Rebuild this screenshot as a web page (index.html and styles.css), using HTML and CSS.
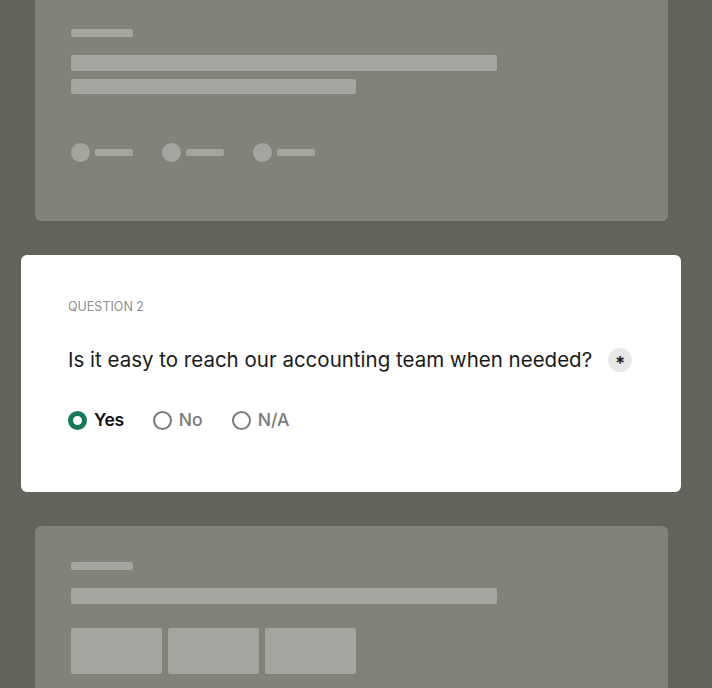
FILE: index.html
```html
<!DOCTYPE html>
<html>
<head>
<meta charset="utf-8">
<link rel="stylesheet" href="styles.css">
</head>
<body>
<div class="page">
  <div class="ghost ghost-top">
    <div class="bar bar-label"></div>
    <div class="bar bar-long"></div>
    <div class="bar bar-mid"></div>
    <div class="ghost-radios">
      <div class="ghost-opt"><span class="dot"></span><span class="bar bar-opt"></span></div>
      <div class="ghost-opt"><span class="dot"></span><span class="bar bar-opt"></span></div>
      <div class="ghost-opt"><span class="dot"></span><span class="bar bar-opt"></span></div>
    </div>
  </div>

  <div class="card">
    <div class="q-label">QUESTION 2</div>
    <div class="q-row">
      <span class="q-text">Is it easy to reach our accounting team when needed?</span>
      <span class="req">*</span>
    </div>
    <div class="options">
      <label class="opt opt-on"><span class="radio radio-on"></span><span>Yes</span></label>
      <label class="opt"><span class="radio"></span><span>No</span></label>
      <label class="opt"><span class="radio"></span><span>N/A</span></label>
    </div>
  </div>

  <div class="ghost ghost-bottom">
    <div class="bar bar-label"></div>
    <div class="bar bar-long"></div>
    <div class="boxes">
      <div class="box"></div>
      <div class="box"></div>
      <div class="box"></div>
    </div>
  </div>
</div>
</body>
</html>
```

FILE: styles.css
```css
html, body {
  margin: 0;
  padding: 0;
}
body {
  background: #62635a;
  font-family: Inter, "Liberation Sans", sans-serif;
  overflow: hidden;
}
.page {
  display: flex;
  flex-direction: column;
  align-items: flex-start;
  gap: 34px;
  height: 688px;
  padding-left: 21px;
  overflow: hidden;
}
.ghost {
  width: 633px;
  box-sizing: border-box;
  background: #81827a;
  border-radius: 6px;
  padding-left: 36px;
  display: flex;
  flex-direction: column;
  flex-shrink: 0;
  margin-left: 14px;
}
.ghost-top {
  margin-top: -20px;
  padding-top: 49px;
  height: 241px;
}
.ghost-bottom {
  padding-top: 36px;
  height: 200px;
}
.bar {
  background: #a4a59e;
  border-radius: 2px;
  display: block;
}
.bar-label {
  width: 62px;
  height: 8px;
}
.bar-long {
  width: 426px;
  height: 16px;
  margin-top: 18px;
}
.bar-mid {
  width: 285px;
  height: 15px;
  margin-top: 8px;
}
.ghost-radios {
  display: flex;
  gap: 29px;
  margin-top: 49px;
  align-items: center;
}
.ghost-opt {
  display: flex;
  align-items: center;
  gap: 5px;
}
.dot {
  width: 19px;
  height: 19px;
  border-radius: 50%;
  background: #a4a59e;
}
.bar-opt {
  width: 38px;
  height: 7px;
}
.boxes {
  display: flex;
  gap: 6px;
  margin-top: 24px;
}
.box {
  width: 91px;
  height: 46px;
  background: #a4a59e;
  border-radius: 2px;
}
.card {
  width: 660px;
  height: 237px;
  box-sizing: border-box;
  background: #ffffff;
  border-radius: 6px;
  padding: 44px 47px 0;
  flex-shrink: 0;
}
.q-label {
  font-size: 12.5px;
  line-height: 16px;
  color: #8f8f8f;
}
.q-row {
  display: flex;
  align-items: center;
  gap: 16px;
  margin-top: 31px;
}
.q-text {
  font-size: 20.5px;
  line-height: 28px;
  color: #1a1a1a;
  white-space: nowrap;
}
.req {
  width: 24px;
  height: 24px;
  flex-shrink: 0;
  border-radius: 50%;
  background: #e8e8e8;
  color: #1a1a1a;
  font-size: 19px;
  font-weight: 600;
  display: flex;
  align-items: center;
  justify-content: center;
  line-height: 1;
  padding-top: 6px;
  box-sizing: border-box;
}
.options {
  display: flex;
  gap: 28px;
  margin-top: 34px;
  align-items: center;
}
.opt {
  display: flex;
  align-items: center;
  gap: 7px;
  font-size: 17.5px;
  line-height: 24px;
  color: #7a7a7a;
  font-weight: 500;
}
.opt + .opt {
  margin-left: 1px;
}
.opt-on {
  color: #111111;
  font-weight: 600;
  letter-spacing: -0.3px;
}
.radio {
  width: 19px;
  height: 19px;
  box-sizing: border-box;
  border-radius: 50%;
  border: 2px solid #7a7a7a;
}
.radio-on {
  border: 5px solid #16775c;
}
```
